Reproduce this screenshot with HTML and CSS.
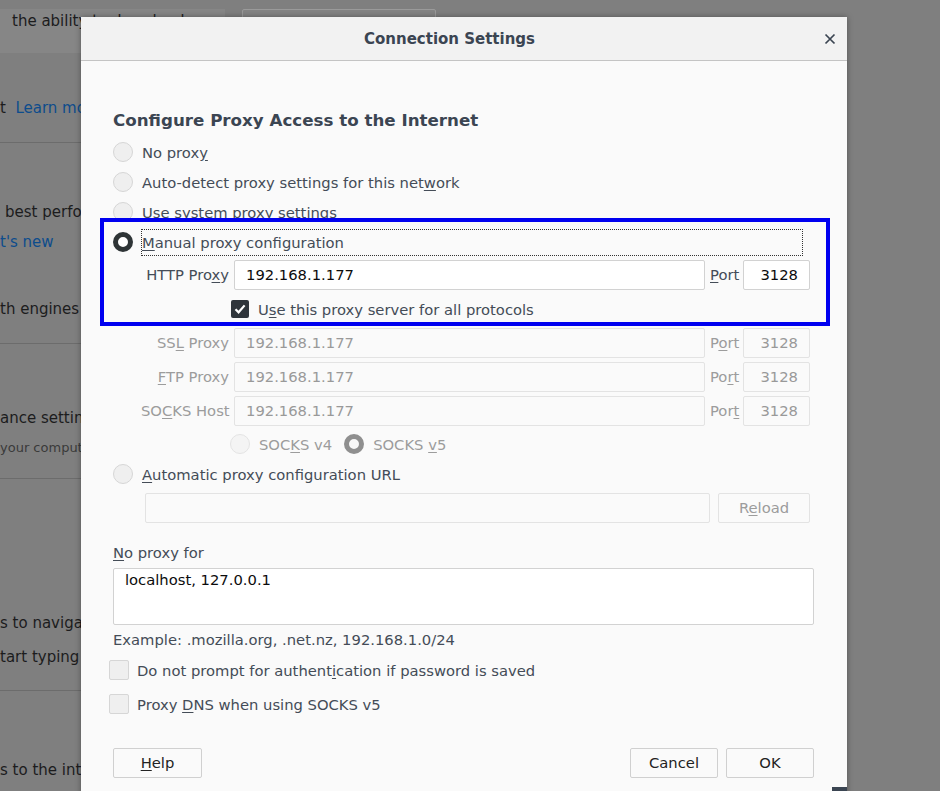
FILE: index.html
```html
<!DOCTYPE html>
<html lang="en">
<head>
<meta charset="UTF-8" />
<meta name="viewport" content="width=device-width, initial-scale=1" />
<title>Connection Settings</title>
<link rel="stylesheet" href="styles.css">
</head>
<body>

<div class="prefs">
  <div class="prefs-top">
    <div class="notice">the ability to download</div>
    <div class="menulist"></div>
  </div>
  <div class="pline l1">t &nbsp;<span class="link">Learn more</span></div>
  <div class="sep s1"></div>
  <div class="pline l2">best performance</div>
  <div class="pline link">t's new</div>
  <div class="pline l3">th engines</div>
  <div class="sep s2"></div>
  <div class="pline l4">ance settings</div>
  <div class="pline small">your computer</div>
  <div class="sep s3"></div>
  <div class="pline l5">s to navigate</div>
  <div class="pline l6">tart typing</div>
  <div class="sep s4"></div>
  <div class="pline l7">s to the internet</div>
</div>

<div class="dialog">
  <div class="dialog-head">
    <span class="dialog-title">Connection Settings</span>
    <svg class="close" width="12" height="12" viewBox="0 0 12 12">
      <path d="M1.5 1.5 L10.5 10.5 M10.5 1.5 L1.5 10.5" stroke="#3b4552" stroke-width="1.7" fill="none" />
    </svg>
  </div>

  <div class="content">
    <h1>Configure Proxy Access to the Internet</h1>

    <div class="radio-row"><span class="radio"></span><span>No prox<u>y</u></span></div>
    <div class="radio-row"><span class="radio"></span><span>Auto-detect proxy settings for this net<u>w</u>ork</span></div>
    <div class="radio-row"><span class="radio"></span><span>Use system proxy settings</span></div>
    <div class="radio-row"><span class="radio on"></span><span class="focus"><u>M</u>anual proxy configuration</span></div>

    <div class="proxy-grid">
      <span class="plabel">HTTP Pro<u>x</u>y</span>
      <span class="field">192.168.1.177</span>
      <span class="plabel"><u>P</u>ort</span>
      <span class="field port">3128</span>

      <div class="check-row">
        <span class="check on">
          <svg width="18" height="18" viewBox="0 0 18 18"><path d="M4.5 9.2 L7.6 12.3 L13.6 5.4" stroke="#fff" stroke-width="2.2" fill="none" /></svg>
        </span>
        <span>U<u>s</u>e this proxy server for all protocols</span>
      </div>

      <span class="plabel off">SS<u>L</u> Proxy</span>
      <span class="field off">192.168.1.177</span>
      <span class="plabel off">P<u>o</u>rt</span>
      <span class="field port off">3128</span>

      <span class="plabel off"><u>F</u>TP Proxy</span>
      <span class="field off">192.168.1.177</span>
      <span class="plabel off">Po<u>r</u>t</span>
      <span class="field port off">3128</span>

      <span class="plabel off">SO<u>C</u>KS Host</span>
      <span class="field off">192.168.1.177</span>
      <span class="plabel off">Por<u>t</u></span>
      <span class="field port off">3128</span>

      <div class="socks-row">
        <span class="radio dis"></span><span class="off">SOC<u>K</u>S v4</span>
        <span class="radio dis on"></span><span class="off">SOCKS <u>v</u>5</span>
      </div>
    </div>

    <div class="radio-row auto"><span class="radio"></span><span><u>A</u>utomatic proxy configuration URL</span></div>

    <div class="url-row">
      <span class="field url"></span>
      <span class="btn reload">R<u>e</u>load</span>
    </div>

    <div class="label-line noproxy"><u>N</u>o proxy for</div>
    <div class="textarea">localhost, 127.0.0.1</div>
    <div class="label-line example">Example: .mozilla.org, .net.nz, 192.168.1.0/24</div>

    <div class="check-row bottom first"><span class="check"></span><span>Do not prompt for authent<u>i</u>cation if password is saved</span></div>
    <div class="check-row bottom"><span class="check"></span><span>Proxy <u>D</u>NS when using SOCKS v5</span></div>

    <div class="buttons">
      <span class="btn help"><u>H</u>elp</span>
      <span class="spacer"></span>
      <span class="btn">Cancel</span>
      <span class="btn">OK</span>
    </div>
  </div>

  <div class="grip"></div>
</div>

<div class="highlight"></div>

</body>
</html>
```

FILE: styles.css
```css
body {
  margin: 0;
  width: 940px;
  height: 791px;
  overflow: hidden;
  position: relative;
  background-color: #7f7f7f;
  font-family: "DejaVu Sans", Verdana, sans-serif;
  font-size: 14.75px;
}

u {
  text-underline-offset: 2px;
}

/* dimmed preferences page behind the dialog */

.prefs {
  color: #1c1c1d;
  font-size: 15px;
}

.prefs-top {
  display: flex;
  margin-top: 9px;
  height: 44px;
}

.notice {
  width: 213px;
  padding-left: 12px;
  line-height: 25px;
  background-color: #868686;
}

.menulist {
  margin-left: 17px;
  width: 192px;
  height: 30px;
  border: 1px solid #9a9a9a;
  border-radius: 2px;
  background-color: #848484;
}

.pline {
  height: 30px;
  line-height: 30px;
  white-space: nowrap;
}

.link {
  color: #0d4c8c;
}

.l1 { margin-top: 40px; }
.l2 { margin-top: 54px; padding-left: 5px; }
.l3 { margin-top: 37px; }
.l4 { margin-top: 59px; }
.l5 { margin-top: 129px; }
.l6 { margin-top: 4px; }
.l7 { margin-top: 64px; }

.small {
  margin-top: 5px;
  height: 20px;
  line-height: 20px;
  font-size: 13px;
  color: #3a3a3a;
}

.sep {
  height: 1px;
  width: 90px;
  background-color: #6c6c6c;
}

.s1 { margin-top: 19px; }
.s2 { margin-top: 19px; }
.s3 { margin-top: 20px; }
.s4 { margin-top: 18px; }

/* dialog */

.dialog {
  position: absolute;
  left: 81px;
  top: 17px;
  width: 766px;
  height: 800px;
  background-color: #fafafa;
  box-shadow: 0 0 6px rgba(0, 0, 0, 0.35);
  color: #444c57;
}

.dialog-head {
  position: relative;
  height: 43px;
  line-height: 44px;
  padding-right: 29px;
  text-align: center;
  background-color: #f2f2f2;
  border-bottom: 1px solid #c4c4c4;
}

.dialog-title {
  font-size: 15px;
  font-weight: bold;
  color: #3b4552;
}

.close {
  position: absolute;
  right: 11px;
  top: 16px;
}

.content {
  padding: 49px 33px 0 32px;
}

h1 {
  margin: 0 0 7px 0;
  font-size: 16.7px;
  line-height: 20px;
  color: #3b4552;
}

.radio-row {
  display: flex;
  align-items: center;
  gap: 9px;
  height: 30px;
  white-space: nowrap;
}

.radio {
  width: 20px;
  height: 20px;
  box-sizing: border-box;
  flex: none;
  border-radius: 50%;
  border: 1px solid #d6d6d6;
  background-color: #efefef;
}

.radio.on {
  border: 5px solid #2e3436;
  background-color: #fff;
}

.radio.dis {
  border-color: #e4e4e4;
  background-color: #f4f4f4;
}

.radio.dis.on {
  border: 5px solid #8f8f8f;
  background-color: #f7f7f7;
  margin-left: 3px;
}

.focus {
  flex: 1;
  margin-left: -1px;
  margin-right: 11px;
  height: 27px;
  line-height: 25px;
  box-sizing: border-box;
  border: 1px dotted #333;
}

.proxy-grid {
  display: grid;
  grid-template-columns: 88px 1fr 28px 67px;
  grid-template-rows: 30px 30px 30px 30px 30px 28px;
  column-gap: 5px;
  row-gap: 4px;
  margin: 3px 4px 0 28px;
}

.plabel {
  line-height: 30px;
  text-align: right;
  white-space: nowrap;
}

.field {
  display: block;
  height: 30px;
  line-height: 28px;
  box-sizing: border-box;
  padding: 0 11px;
  border: 1px solid #d2d2d2;
  border-radius: 2px;
  background-color: #fff;
  color: #0c0c0d;
}

.field.port {
  text-align: right;
}

.off {
  color: #9c9c9c;
}

.field.off {
  border-color: #e3e3e3;
  background-color: #fafafa;
  color: #999;
}

.check-row {
  grid-column: 2 / -1;
  display: flex;
  align-items: center;
  gap: 9px;
  margin-left: -3px;
  white-space: nowrap;
}

.check {
  width: 18px;
  height: 18px;
  box-sizing: border-box;
  flex: none;
  border-radius: 2px;
  border: 1px solid #d6d6d6;
  background-color: #efefef;
}

.check.on {
  border: none;
  background-color: #2f353b;
}

.check svg {
  display: block;
}

.socks-row {
  grid-column: 2 / -1;
  display: flex;
  align-items: center;
  gap: 9px;
  margin-left: -4px;
  white-space: nowrap;
}

.auto {
  margin-top: 1px;
}

.url-row {
  display: flex;
  gap: 8px;
  margin: 4px 4px 0 32px;
}

.field.url {
  flex: 1;
  border-color: #e3e3e3;
  background-color: #fafafa;
}

.btn {
  display: block;
  width: 88px;
  height: 30px;
  line-height: 28px;
  box-sizing: border-box;
  text-align: center;
  border: 1px solid #d0d0d0;
  border-radius: 2px;
  background-color: #fafafa;
  color: #222;
}

.btn.reload {
  width: 92px;
  border-color: #e3e3e3;
  color: #9c9c9c;
}

.btn.help {
  width: 89px;
}

.label-line {
  height: 20px;
  line-height: 20px;
}

.noproxy {
  margin-top: 20px;
}

.textarea {
  margin-top: 5px;
  height: 57px;
  box-sizing: border-box;
  padding: 2px 11px;
  line-height: 18px;
  border: 1px solid #d2d2d2;
  border-radius: 2px;
  background-color: #fff;
  color: #0c0c0d;
}

.example {
  margin-top: 5px;
}

.check-row.bottom {
  height: 30px;
  margin-left: -4px;
  gap: 8px;
  margin-top: 4px;
}

.check-row.bottom .check {
  width: 20px;
  height: 20px;
}

.check-row.first {
  margin-top: 5px;
}

.buttons {
  display: flex;
  gap: 8px;
  margin-top: 29px;
}

.spacer {
  flex: 1;
}

.grip {
  position: absolute;
  right: 0;
  top: 770px;
  width: 15px;
  height: 15px;
  background-color: #3b4552;
}

/* annotation frame drawn over the dialog */

.highlight {
  position: absolute;
  left: 100px;
  top: 218px;
  width: 730px;
  height: 108px;
  box-sizing: border-box;
  border: 4px solid #0000f0;
}
```
